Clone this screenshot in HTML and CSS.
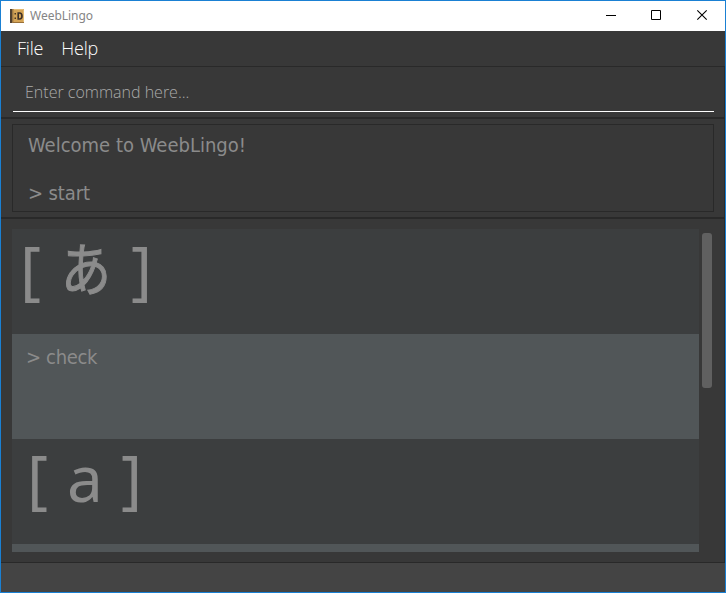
FILE: index.html
```html
<!DOCTYPE html>
<html lang="en">
<head>
<meta charset="utf-8">
<title>WeebLingo</title>
<link rel="stylesheet" href="styles.css">
</head>
<body>
<div class="window">
  <header class="titlebar">
    <svg class="app-icon" width="14" height="14" viewBox="0 0 14 14">
      <rect width="14" height="14" fill="#d5a456"/>
      <path d="M4 .5h9.500v13" fill="none" stroke="#e3bb75"/>
      <rect width="2.500" height="14" fill="#51402f"/>
      <path d="M2.500 0h1v14h-1z" fill="#a98047"/>
      <path d="M3 13.500h11" stroke="#997039"/>
      <path d="M4.500 4h1.500v1.500H4.500zM4.500 8.500h1.500V10H4.500z" fill="#4b3721"/>
      <path d="M8.200 4v6h1.300q2.500 0 2.500-3t-2.500-3z" fill="none" stroke="#3d3028" stroke-width="1.600"/>
    </svg>
    <span class="title">WeebLingo</span>
    <div class="controls">
      <svg width="46" height="30" viewBox="0 0 46 30"><path d="M18 14.500h10" stroke="#000"/></svg>
      <svg width="46" height="30" viewBox="0 0 46 30"><path d="M17.500 9.500h9v9h-9z" fill="none" stroke="#000"/></svg>
      <svg width="45" height="30" viewBox="0 0 45 30"><path d="M17.300 9.300l9.400 9.400m0-9.400l-9.400 9.400" stroke="#000" stroke-width="1.100"/></svg>
    </div>
  </header>
  <nav class="menu"><span class="file">File</span><span class="help">Help</span></nav>
  <section class="command"><div class="field"><span class="prompt">Enter command here...</span></div></section>
  <section class="result"><div class="result-box"><p class="welcome">Welcome to WeebLingo!</p><p class="start">&gt; start</p></div></section>
  <section class="content">
    <div class="list">
      <div class="row glyph kana"><span>[</span><span class="char">あ</span><span>]</span></div>
      <div class="row alt"><span class="check">&gt; check</span></div>
      <div class="row glyph latin"><span>[</span><span class="char">a</span><span>]</span></div>
      <div class="row alt"></div>
    </div>
    <div class="scroll"><div class="thumb"></div></div>
  </section>
  <footer class="status"></footer>
</div>
</body>
</html>
```
FILE: styles.css
```css
* { box-sizing: border-box; }
body { margin: 0; overflow: hidden; background: #383838; }
p { margin: 0; }
svg { display: block; }
.window {
  width: 726px; height: 593px; border: 1px solid #1a80d3;
  display: flex; flex-direction: column; background: #383838;
  font-family: "DejaVu Sans Condensed", "DejaVu Sans", sans-serif; color: #8b8b8b;
}
.titlebar { height: 30px; flex: none; background: #fff; display: flex; align-items: center; padding-left: 9px; }
.title { font: 12px/16px "Noto Sans", sans-serif; margin-left: 6px; color: #858585; letter-spacing: -.02px; }
.controls { display: flex; margin-left: auto; }
.menu {
  height: 36px; flex: none; border-bottom: 1px solid #292929; padding: 0 16px;
  display: flex; font: 300 18px/35px "Open Sans", sans-serif; color: #fff;
}
.file, .help { letter-spacing: -.2px; }
.help { margin-left: 18px; }
.command { height: 52px; flex: none; border-bottom: 2px solid #292929; padding: 4px 10px 6px 12px; border-right: 1px solid #2b2b2b; }
.field { height: 41px; border-bottom: 1px solid #fff; padding-left: 12px; font: 300 16px/42px "Open Sans", sans-serif; color: #aaa; }
.result { height: 100px; flex: none; border-bottom: 2px solid #292929; padding: 5px 10px 5px 11px; border-right: 1px solid #2b2b2b; }
.result-box { width: 702px; height: 88px; border: 1px solid #292929; padding: 8px 15px; font-size: 20px; line-height: 24px; }
.start { margin-top: 24px; letter-spacing: -.1px; }
.content { height: 344px; flex: none; display: flex; padding: 10px 10px 10px 11px; border-right: 1px solid #2b2b2b; border-bottom: 1px solid #292929; }
.list { width: 687px; height: 323px; overflow: hidden; }
.row { height: 105px; background: #3c3e3f; }
.alt { background: #515658; padding: 11px 14px; font-size: 20px; line-height: 24px; }
.check { letter-spacing: -.35px; }
.glyph { display: flex; font: 64px/80px "Noto Sans", "Noto Sans CJK JP", sans-serif; }
.kana { padding-left: 8px; }
.kana .char {
  font: 50px/80px "Noto Sans CJK JP", sans-serif; margin: 0 20px 0 20px;
  transform: translateY(-2px) scaleY(1.16); -webkit-text-stroke: .9px #8b8b8b;
}
.latin { padding-left: 15px; }
.latin > span { position: relative; top: -1px; }
.latin .char { margin: 0 18px 0 19px; }
.scroll { width: 13px; padding: 4px 0 0 3px; }
.thumb { width: 10px; height: 155px; border-radius: 3px; background: #606060; }
.status { flex: 1; background: #444; }
```
